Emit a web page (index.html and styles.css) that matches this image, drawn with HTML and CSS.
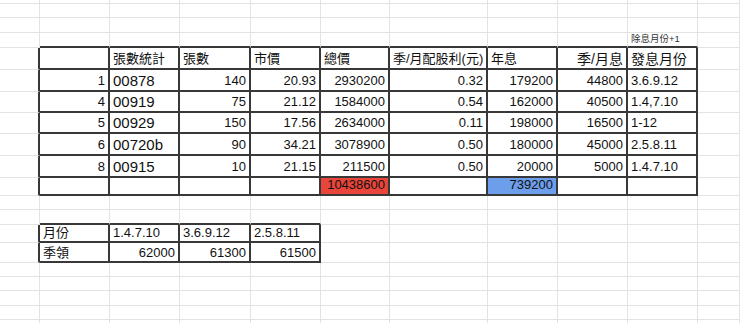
FILE: index.html
```html
<!DOCTYPE html>
<html lang="zh-Hant">
<head>
  <meta charset="UTF-8">
  <title>張數統計</title>
  <link rel="stylesheet" href="styles.css">
</head>
<body>
<div class="sheet">
  <div class="row h4"><div></div><div></div><div></div><div></div><div></div><div></div><div></div><div></div><div></div><div></div><div></div></div>
  <div class="row h14"><div></div><div></div><div></div><div></div><div></div><div></div><div></div><div></div><div></div><div></div><div></div></div>
  <div class="row h15"><div></div><div></div><div></div><div></div><div></div><div></div><div></div><div></div><div></div><div></div><div></div></div>
  <div class="row h15">
    <div></div>
    <div class="bt"></div><div class="bt"></div><div class="bt"></div><div class="bt"></div><div class="bt"></div>
    <div class="bt"></div><div class="bt"></div><div class="bt"></div><div class="bt note">除息月份+1</div>
    <div></div>
  </div>

  <!-- holdings -->
  <div class="row h22">
    <div class="bl"></div>
    <div class="b"></div>
    <div class="b">張數統計</div>
    <div class="b">張數</div>
    <div class="b">市價</div>
    <div class="b">總價</div>
    <div class="b">季/月配股利(元)</div>
    <div class="b">年息</div>
    <div class="b n big">季/月息</div>
    <div class="b big">發息月份</div>
    <div></div>
  </div>
  <div class="row h22">
    <div class="bl"></div>
    <div class="b n">1</div><div class="b code">00878</div><div class="b n">140</div><div class="b n">20.93</div>
    <div class="b n">2930200</div><div class="b n">0.32</div><div class="b n">179200</div><div class="b n">44800</div>
    <div class="b">3.6.9.12</div>
    <div></div>
  </div>
  <div class="row h21">
    <div class="bl"></div>
    <div class="b n">4</div><div class="b code">00919</div><div class="b n">75</div><div class="b n">21.12</div>
    <div class="b n">1584000</div><div class="b n">0.54</div><div class="b n">162000</div><div class="b n">40500</div>
    <div class="b">1.4,7.10</div>
    <div></div>
  </div>
  <div class="row h21">
    <div class="bl"></div>
    <div class="b n">5</div><div class="b code">00929</div><div class="b n">150</div><div class="b n">17.56</div>
    <div class="b n">2634000</div><div class="b n">0.11</div><div class="b n">198000</div><div class="b n">16500</div>
    <div class="b">1-12</div>
    <div></div>
  </div>
  <div class="row h22">
    <div class="bl"></div>
    <div class="b n">6</div><div class="b code">00720b</div><div class="b n">90</div><div class="b n">34.21</div>
    <div class="b n">3078900</div><div class="b n">0.50</div><div class="b n">180000</div><div class="b n">45000</div>
    <div class="b">2.5.8.11</div>
    <div></div>
  </div>
  <div class="row h22">
    <div class="bl"></div>
    <div class="b n">8</div><div class="b code">00915</div><div class="b n">10</div><div class="b n">21.15</div>
    <div class="b n">211500</div><div class="b n">0.50</div><div class="b n">20000</div><div class="b n">5000</div>
    <div class="b">1.4.7.10</div>
    <div></div>
  </div>
  <div class="row h18">
    <div class="bl"></div>
    <div class="b"></div><div class="b"></div><div class="b"></div><div class="b"></div>
    <div class="b n red">10438600</div><div class="b"></div><div class="b n blue">739200</div><div class="b"></div>
    <div class="b"></div>
    <div></div>
  </div>

  <div class="row h14"><div></div><div></div><div></div><div></div><div></div><div></div><div></div><div></div><div></div><div></div><div></div></div>
  <div class="row h15">
    <div></div>
    <div class="bt"></div><div class="bt"></div><div class="bt"></div><div class="bt"></div>
    <div></div><div></div><div></div><div></div><div></div><div></div>
  </div>

  <!-- quarterly -->
  <div class="row h18 low">
    <div class="bl"></div>
    <div class="b">月份</div><div class="b">1.4.7.10</div><div class="b">3.6.9.12</div><div class="b">2.5.8.11</div>
    <div></div><div></div><div></div><div></div><div></div><div></div>
  </div>
  <div class="row h20 low">
    <div class="bl"></div>
    <div class="b">季領</div><div class="b n">62000</div><div class="b n">61300</div><div class="b n">61500</div>
    <div></div><div></div><div></div><div></div><div></div><div></div>
  </div>

  <div class="row h14"><div></div><div></div><div></div><div></div><div></div><div></div><div></div><div></div><div></div><div></div><div></div></div>
  <div class="row h14"><div></div><div></div><div></div><div></div><div></div><div></div><div></div><div></div><div></div><div></div><div></div></div>
  <div class="row h15"><div></div><div></div><div></div><div></div><div></div><div></div><div></div><div></div><div></div><div></div><div></div></div>
  <div class="row h14"><div></div><div></div><div></div><div></div><div></div><div></div><div></div><div></div><div></div><div></div><div></div></div>
  <div class="row h14"><div></div><div></div><div></div><div></div><div></div><div></div><div></div><div></div><div></div><div></div><div></div></div>
</div>
</body>
</html>
```

FILE: styles.css
```css
* {
  margin: 0;
  padding: 0;
  box-sizing: border-box;
}

body {
  background: #fff;
  overflow: hidden;
  font-family: "Liberation Sans", Arial, "Noto Sans CJK TC", sans-serif;
  color: #111;
}

.sheet {
  width: 740px;
  font-size: 13px;
  line-height: 1.15;
}

.row {
  display: grid;
  grid-template-columns: 40px 70px 70px 71px 70px 69px 98px 70px 70px 70px 1fr;
}

.h4 { height: 4px; }
.h14 { height: 14px; }
.h15 { height: 15px; }
.h18 { height: 18px; }
.h20 { height: 20px; }
.h21 { height: 21px; }
.h22 { height: 22px; }

.row > div {
  display: flex;
  align-items: flex-end;
  padding: 0 3px 1px;
  border-right: 1px solid #e3e3e3;
  border-bottom: 1px solid #e3e3e3;
  white-space: nowrap;
  overflow: hidden;
}

.low > div {
  padding-bottom: 0;
}

/* dark table borders */
.row > .b {
  border-right: 2px solid #383838;
  border-bottom: 2px solid #383838;
}

.row > .bt {
  border-bottom: 2px solid #383838;
}

.row > .bl {
  border-right: 2px solid #383838;
}

.n {
  justify-content: flex-end;
}

.code {
  font-size: 15px;
}

.big {
  font-size: 14px;
}

.note {
  font-size: 9.5px;
  color: #333;
}

.red {
  background: #e9453a;
}

.blue {
  background: #6d9eeb;
}
```
